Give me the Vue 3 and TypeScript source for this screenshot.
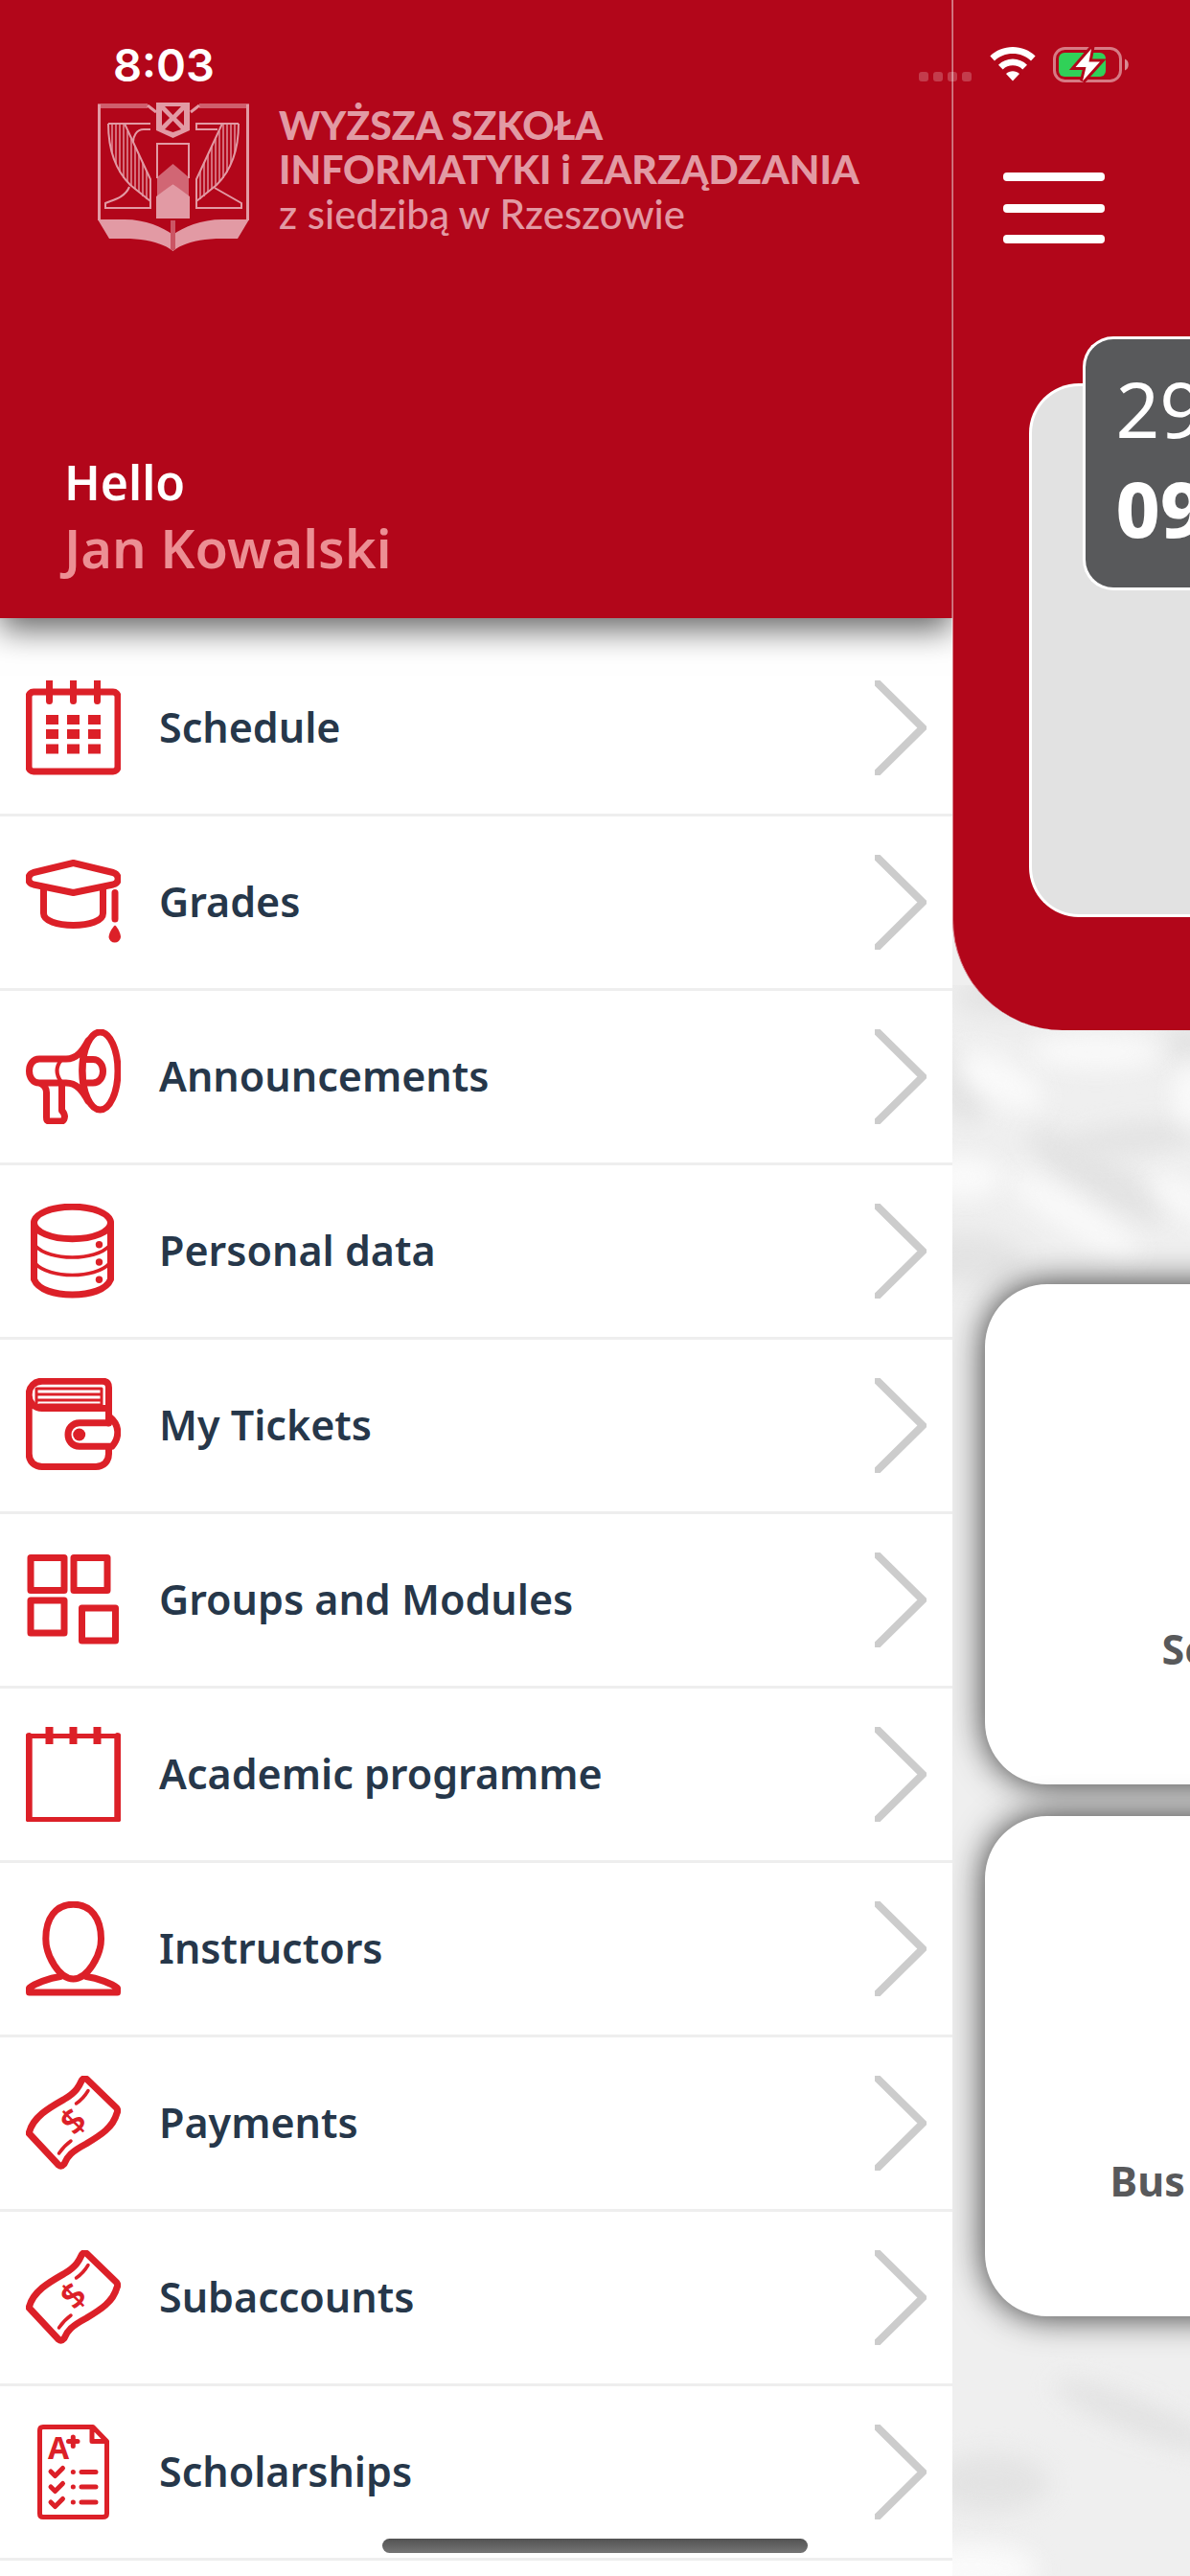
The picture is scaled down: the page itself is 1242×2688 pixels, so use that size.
<script setup lang="ts">
type IconName =
  | 'schedule' | 'grades' | 'megaphone' | 'database' | 'wallet' | 'groups'
  | 'programme' | 'person' | 'banknote' | 'scholarship'

interface MenuItem {
  label: string
  icon: IconName
}

const menu: MenuItem[] = [
  { label: 'Schedule', icon: 'schedule' },
  { label: 'Grades', icon: 'grades' },
  { label: 'Announcements', icon: 'megaphone' },
  { label: 'Personal data', icon: 'database' },
  { label: 'My Tickets', icon: 'wallet' },
  { label: 'Groups and Modules', icon: 'groups' },
  { label: 'Academic programme', icon: 'programme' },
  { label: 'Instructors', icon: 'person' },
  { label: 'Payments', icon: 'banknote' },
  { label: 'Subaccounts', icon: 'banknote' },
  { label: 'Scholarships', icon: 'scholarship' },
]

const tiles: { label: string; kind: string }[] = [
  { label: 'Schedule', kind: 'tile-schedule' },
  { label: 'Bus', kind: 'tile-bus' },
]
</script>

<template>
  <div class="screen">
    <div class="status">
      <span class="clock">8:03</span>
      <div class="signals">
        <div class="cell"><i></i><i></i><i></i><i></i></div>
        <svg class="wifi" viewBox="0 0 48 36" aria-hidden="true">
          <path d="M24 0C33 0 41.500 3.500 47.600 9.500L43 14.500C38 9.500 31.500 7 24 7S10 9.500 5 14.500L.4 9.500C6.500 3.500 15 0 24 0Z" />
          <path d="M24 12.500C29.800 12.500 35 14.800 39 18.700L34.300 23.500C31.500 20.700 28 19.300 24 19.300S16.500 20.700 13.700 23.500L9 18.700C13 14.800 18.200 12.500 24 12.500Z" />
          <path d="M24 25.300C26.600 25.300 29 26.300 31 28L24 35.500L17 28C19 26.300 21.400 25.300 24 25.300Z" />
        </svg>
        <svg class="battery" viewBox="0 0 80 38" aria-hidden="true">
          <rect x="1.500" y="1.500" width="69" height="34" rx="11" fill="none" stroke="#d77a84" stroke-width="3" />
          <rect x="6" y="6" width="49" height="25" rx="6" fill="#30d158" />
          <path d="M75 12.500C80 14 80 23 75 24.500Z" fill="#d98a93" />
          <path d="M40 2L23.500 21H34.500L31 35.500L49 15.500H37.500Z" fill="#fff" stroke="#b2061a" stroke-width="6" />
          <path d="M40 2L23.500 21H34.500L31 35.500L49 15.500H37.500Z" fill="#fff" />
        </svg>
      </div>
    </div>

    <aside class="drawer">
      <header class="profile">
        <div class="brand">
          <svg class="emblem" viewBox="0 0 158 155" aria-hidden="true">
            <g fill="none" stroke="#e29aa4" stroke-width="2">
              <path d="M1.500 123V2M156.500 123V2" stroke-width="3" />
              <path d="M0 3.500H52M106 3.500H158" stroke-width="5" opacity=".6" />
              <path d="M52 3L61 10M106 3L97 10" stroke-width="3" />
              <path d="M62 79V43H95V79" />
              <path d="M11 22H55M11 22C11 50 20 72 34 86L55 103V80L28 22M33 88C28 100 14 102 8 105V110H55V98M55 28H48C40 28 37 36 37 41" />
              <path d="M147 22H103V28H125M147 22C147 50 138 72 124 86L103 103V80L130 22M122 89L150 105V110H103V98" />
              <path d="M15 23V52M19 23V64M23 23V73M27 23V79M31 30V83M35 38V87M39 46V90M43 54V94M47 62V98M51 71V101" opacity=".7" />
              <path d="M143 23V52M139 23V64M135 23V73M131 23V79M127 30V83M123 38V87M119 46V90M115 54V94M111 62V98M107 71V101" opacity=".7" />
            </g>
            <g fill="#e29aa4">
              <path d="M62 78L78.500 64L95 78V99L78.500 85L62 99Z" opacity=".65" />
              <path d="M61 98L78.500 85L96 98V121H61Z" />
              <path d="M61 0H96V29L78.500 37L61 29Z" />
              <path d="M0 122H28C50 122 68 130 78.500 138C89 130 108 122 130 122H158L146 142H130C106 142 88 147 78.500 155C69 147 50 142 28 142H12Z" />
            </g>
            <path d="M70 4H87L78.500 13ZM67 8V24L75 16ZM90 8V24L82 16ZM70 28L78.500 19L87 28L78.500 31Z" fill="#b2061a" />
            <path d="M78.500 123V154" stroke="#cb5564" stroke-width="5" />
          </svg>
          <div class="brand-text">
            <span>WYŻSZA SZKOŁA</span>
            <span>INFORMATYKI i ZARZĄDZANIA</span>
            <span class="seat">z siedzibą w Rzeszowie</span>
          </div>
        </div>
        <div class="greeting">
          <span class="hello">Hello</span>
          <span class="name">Jan Kowalski</span>
        </div>
      </header>

      <nav class="menu">
        <a v-for="item in menu" :key="item.label" class="row" href="#">
          <svg class="icon" viewBox="0 0 99 99" aria-hidden="true">
            <g v-if="item.icon === 'schedule'">
              <rect x="3" y="12" width="93" height="83" rx="5" />
              <path d="M24.500 3V21.500M49.500 3V21.500M74.500 3V21.500" />
              <path d="M24.500 0V8M49.500 0V8M74.500 0V8" stroke-linecap="butt" />
              <path d="M21 41H34M43 41H56M65 41H78M21 56H34M43 56H56M65 56H78M21 71.500H34M43 71.500H56M65 71.500H78" stroke-width="10" stroke-linecap="butt" />
            </g>
            <g v-else-if="item.icon === 'grades'">
              <path d="M49.500 8.500L91 18.500C98 21 98 29 91 31L49.500 39.500L8 31C1 29 1 21 8 18.500Z" />
              <path d="M18.500 34V61C18.500 69 33 73.500 49.500 73.500S80.500 69 80.500 61V34M93 39.500V67" />
              <path class="solid" d="M93 73.500C96 76 99 82 99 86A6.300 6.300 0 0 1 86.500 86C86.500 82 90 76 93 73.500Z" />
            </g>
            <g v-else-if="item.icon === 'megaphone'">
              <ellipse cx="77.500" cy="43.500" rx="18.500" ry="40.500" />
              <path d="M65 12C59 23 53 31 42 31H14C0 31 0 56 14 56H42C53 56 59 64 65 75M60.500 25Q57 43 60.500 62M61 31.500H70C84 31.500 84 56 70 56H61" />
              <path d="M37 32Q28 43 37 55" stroke-width="4" />
              <path d="M16 57Q21.500 60 21.500 66V92Q21.500 96 25 96H37Q40 96 40.500 91Q40 87 37.500 85V58" />
            </g>
            <g v-else-if="item.icon === 'database'">
              <ellipse cx="48.500" cy="20" rx="40" ry="16.800" />
              <path d="M8.500 20V79C13 90 30 95 48.500 95S84 90 88.500 79V20" />
              <path d="M10 44C24 60 73 60 87 44M10 62.500C24 78.500 73 78.500 87 62.500" stroke-width="3.500" />
              <g class="solid"><circle cx="76.500" cy="42.700" r="3.700" /><circle cx="76.500" cy="61" r="3.700" /><circle cx="76.500" cy="79.300" r="3.700" /></g>
            </g>
            <g v-else-if="item.icon === 'wallet'">
              <path d="M86.500 47V10Q86.500 3.200 80 3.200H17C9 3.200 3.200 9 3.200 17V79C3.200 87 9 92.500 17 92.500H73C81 92.500 86.500 87 86.500 79V73M3.200 18C3.200 26 9 31.500 17 31.500H86" />
              <path d="M86 46.700H56C40 47 40 71 56 71.300H90C98 62 98 49 88 41" />
              <path d="M11 30V11H79V30M11 17H79M11 23H79M14 28H79" stroke-width="3" />
              <circle class="solid" cx="55.700" cy="59" r="6.500" />
            </g>
            <g v-else-if="item.icon === 'groups'">
              <rect x="5" y="5.500" width="35" height="34" />
              <rect x="50" y="5.500" width="35" height="34" />
              <rect x="5" y="50" width="35" height="34" />
              <rect x="58.500" y="58" width="35" height="34" />
            </g>
            <g v-else-if="item.icon === 'programme'">
              <path d="M3.200 9.500V96M95.800 9.500V96" />
              <path d="M3 9.500H96M3 96.500H96" stroke-width="5" />
              <path d="M24.500 0V18M49.500 0V18M74.500 0V18" stroke-width="8" stroke-linecap="butt" />
            </g>
            <g v-else-if="item.icon === 'person'">
              <path d="M49.500 3.200C68 3.200 78.500 18 78.500 39C78.500 57 64 81 49.500 81S20.800 57 20.800 39C20.800 18 31 3.200 49.500 3.200Z" />
              <path d="M36 78.500C24 80 9 86 3.500 90.500V95H95.500V90.500C90 86 75 80 63 78.500" />
            </g>
            <g v-else-if="item.icon === 'banknote'">
              <path d="M3.200 60C7 43 25 33 40 24.500C53 17 56 10 58.500 4.500Q61 1.500 64 4L94.500 33.500Q96.500 36 95 39C91 54 78 62 63 71C48 79 43 84 40 92Q37 95.500 34 93Z" />
              <path d="M65 15.500Q60 24 52.500 29M47 68Q40 73 34.500 81" stroke-width="3.500" />
              <text transform="translate(49.500 47.500) rotate(-45)" y="13">$</text>
            </g>
            <g v-else>
              <path d="M70 2.500H18Q14.500 2.500 14.500 6V93Q14.500 96.500 18 96.500H80Q84.500 96.500 84.500 93V17.500ZM69 2.500V17.500H84" stroke-width="5" />
              <text class="grade" x="23" y="36">A</text>
              <path d="M44.500 17.500H54M49.300 13V22.500M26 49L30.500 53.500L38.500 45.500M26 65L30.500 69.500L38.500 61.500M26 81L30.500 85.500L38.500 77.500M49.300 49.500H49.400M49.300 65H49.400M49.300 81H49.400M58 49.500H73M58 65H73M58 81H73" stroke-width="5" />
            </g>
          </svg>
          <span class="label">{{ item.label }}</span>
          <svg class="chevron" viewBox="0 0 54 99" aria-hidden="true"><path d="M3 3L50 49.500L3 96" /></svg>
        </a>
      </nav>
    </aside>

    <main class="home">
      <svg class="marble" viewBox="0 0 248 1660" preserveAspectRatio="xMinYMin slice" aria-hidden="true">
        <g class="dark">
          <ellipse cx="150" cy="198" rx="85" ry="22" transform="rotate(32 150 198)" />
          <ellipse cx="190" cy="160" rx="70" ry="16" transform="rotate(-6 190 160)" />
          <ellipse cx="5" cy="105" rx="24" ry="42" transform="rotate(-30 5 105)" />
          <ellipse cx="15" cy="285" rx="60" ry="26" />
          <ellipse cx="60" cy="12" rx="60" ry="20" />
          <ellipse cx="245" cy="60" rx="24" ry="20" />
          <ellipse cx="190" cy="1490" rx="90" ry="18" transform="rotate(22 190 1490)" />
          <ellipse cx="40" cy="1560" rx="60" ry="30" />
        </g>
        <g class="light">
          <ellipse cx="125" cy="240" rx="80" ry="16" transform="rotate(32 125 240)" />
          <ellipse cx="245" cy="225" rx="44" ry="15" transform="rotate(34 245 225)" />
          <ellipse cx="12" cy="200" rx="40" ry="22" />
          <ellipse cx="50" cy="100" rx="50" ry="22" transform="rotate(30 50 100)" />
          <ellipse cx="150" cy="70" rx="70" ry="16" />
          <ellipse cx="250" cy="115" rx="20" ry="34" />
          <ellipse cx="20" cy="1650" rx="70" ry="26" />
        </g>
      </svg>
      <section class="hero">
        <button class="burger" type="button" aria-label="Menu"><i></i><i></i><i></i></button>
        <div class="agenda">
          <div class="date"><span>29</span><strong>09</strong></div>
        </div>
      </section>
      <section class="tiles">
        <a v-for="tile in tiles" :key="tile.kind" class="tile" :class="tile.kind" href="#">{{ tile.label }}</a>
      </section>
    </main>

    <div class="home-indicator"></div>
  </div>
</template>

<style>
body {
  margin: 0;
}
</style>

<style scoped>
.screen {
  position: relative;
  display: flex;
  min-height: 100vh;
  overflow: hidden;
  font-family: "Noto Sans", "Open Sans", sans-serif;
}

a {
  color: inherit;
  text-decoration: none;
}

.status {
  position: absolute;
  z-index: 3;
  top: 0;
  left: 0;
  right: 0;
  display: flex;
  justify-content: space-between;
  padding: 38px 63px 0 118px;
  color: #fff;
}

.clock {
  font: 600 47px/60px Inter, sans-serif;
}

.signals {
  display: flex;
  align-items: flex-start;
  padding-top: 11px;
}

.cell {
  display: flex;
  gap: 5px;
  margin: 26px 19px 0 0;
}

.cell i {
  width: 10px;
  height: 10px;
  border-radius: 3px;
  background: rgba(255, 255, 255, .22);
}

.wifi {
  width: 48px;
  height: 36px;
  margin-right: 18px;
  fill: #fff;
}

.battery {
  width: 80px;
  height: 38px;
}

.drawer {
  flex: 0 0 80%;
  display: flex;
  flex-direction: column;
  background: #fff;
}

.profile {
  display: flex;
  flex-direction: column;
  justify-content: space-between;
  box-sizing: border-box;
  min-height: 645px;
  padding: 107px 66px 38px 67px;
  background: #b2061a;
  box-shadow: 0 12px 32px rgba(0, 0, 0, .6);
  clip-path: inset(0 0 -60px 0);
}

.brand {
  display: flex;
  gap: 31px;
  padding-left: 35px;
  color: #e29aa4;
}

.emblem {
  width: 158px;
  height: 155px;
}

.brand-text {
  display: flex;
  flex-direction: column;
  padding-top: 1px;
  font: 900 41px/46px Lato, sans-serif;
  white-space: nowrap;
}

.seat {
  font-size: 42px;
  font-weight: 500;
}

.greeting {
  display: flex;
  flex-direction: column;
  font-weight: 600;
}

.hello {
  color: #fff;
  font-size: 50px;
  line-height: 64px;
}

.name {
  color: #ec8f94;
  font-size: 56px;
  line-height: 72px;
}

.menu {
  display: flex;
  flex-direction: column;
  padding-top: 25px;
}

.row {
  display: flex;
  align-items: center;
  box-sizing: border-box;
  height: 182px;
  padding: 0 27px;
  border-bottom: 3px solid #eee;
  color: #26374a;
}

.icon {
  flex: none;
  width: 99px;
  height: 99px;
  margin-right: 40px;
  fill: none;
  stroke: #dc2028;
  stroke-width: 7px;
  stroke-linecap: round;
  stroke-linejoin: round;
}

.icon .solid,
.icon text {
  fill: #dc2028;
  stroke: none;
}

.icon text {
  font: 600 37px "Noto Sans", sans-serif;
  text-anchor: middle;
}

.icon .grade {
  font-size: 32px;
  font-weight: 700;
  text-anchor: start;
}

.label {
  flex: 1;
  padding-bottom: 2px;
  font-size: 43px;
  font-weight: 600;
  line-height: 60px;
}

.chevron {
  flex: none;
  width: 54px;
  height: 99px;
  fill: none;
  stroke: #ccc;
  stroke-width: 8px;
  stroke-linecap: round;
}

.home {
  position: relative;
  flex: 1;
  min-width: 0;
  overflow: hidden;
  background: #efefef;
}

.marble {
  position: absolute;
  top: 1028px;
  left: 0;
  width: 100%;
  height: 1660px;
}

.marble ellipse {
  filter: blur(12px);
}

.marble .dark {
  fill: #e3e3e3;
}

.marble .light {
  fill: #fafafa;
}

.hero {
  position: relative;
  box-sizing: border-box;
  height: 1075px;
  padding: 179px 0 0 52px;
  border-left: 1px solid #d9808a;
  border-bottom-left-radius: 115px;
  background: #b2061a;
}

.burger {
  display: flex;
  flex-direction: column;
  justify-content: space-between;
  width: 106px;
  height: 76px;
  padding: 1px 0;
  border: 0;
  background: none;
}

.burger i {
  height: 9px;
  border-radius: 4px;
  background: #fff;
}

.agenda {
  position: relative;
  box-sizing: border-box;
  height: 557px;
  margin: 145px 0 0 27px;
  border: 3px solid #fff;
  border-right: 0;
  border-radius: 52px 0 0 52px;
  background: #e2e2e2;
}

.date {
  position: absolute;
  top: -52px;
  left: 53px;
  right: 0;
  display: flex;
  flex-direction: column;
  box-sizing: border-box;
  height: 265px;
  padding: 20px 0 0 32px;
  overflow: hidden;
  border: 3px solid #fff;
  border-right: 0;
  border-radius: 32px 0 0 32px;
  background: #58595b;
  color: #fff;
  font-size: 80px;
  line-height: 104px;
}

.date span {
  font-weight: 400;
}

.date strong {
  font-weight: 800;
}

.tiles {
  position: relative;
  display: flex;
  flex-direction: column;
  gap: 33px;
  margin-right: -80px;
  padding: 265px 0 270px 34px;
}

.tile {
  display: flex;
  align-items: flex-end;
  box-sizing: border-box;
  height: 522px;
  padding-bottom: 111px;
  border-radius: 65px 0 0 65px;
  background: #fff;
  box-shadow: 0 0 36px rgba(0, 0, 0, .8);
  color: #58595b;
  font-size: 43px;
  font-weight: 700;
  line-height: 60px;
}

.tile-schedule {
  padding-left: 185px;
}

.tile-bus {
  padding-left: 131px;
}

.home-indicator {
  position: absolute;
  z-index: 3;
  bottom: 24px;
  left: 50%;
  width: 444px;
  height: 15px;
  border-radius: 8px;
  background: linear-gradient(#525252, #757575);
  transform: translateX(-50%);
}
</style>
